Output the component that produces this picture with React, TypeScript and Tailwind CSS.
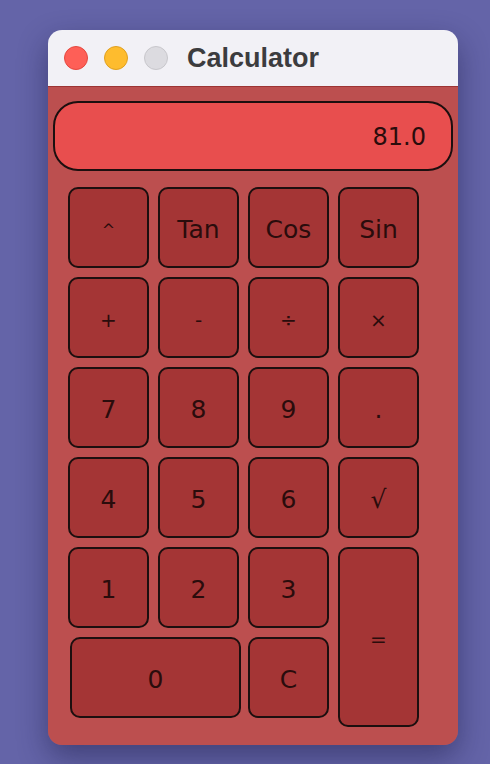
const rows: string[][] = [
  ['^', 'Tan', 'Cos', 'Sin'],
  ['+', '-', '÷', '×'],
  ['7', '8', '9', '.'],
  ['4', '5', '6', '√'],
];

// operator glyphs render smaller in the reference
const sizeFor = (label: string) => {
  if (label === '^') return 'text-[16px]';
  if (['+', '-', '÷', '×', '='].includes(label)) return 'text-[20px]';
  return 'text-[25px]';
};

const Key = ({ label, className = '' }: { label: string; className?: string }) => (
  <button
    className={`flex items-center justify-center rounded-[10px] border-2 border-[#1c0f0f] bg-[#a43535] pt-[4px] text-[#2a0c0c] ${sizeFor(label)} ${className}`}
  >
    {label}
  </button>
);

export default function App() {
  return (
    <div
      className="min-h-[764px] w-full bg-[#6464a8] pl-[48px] pt-[30px]"
      style={{ fontFamily: '"DejaVu Sans", Verdana, sans-serif' }}
    >
      <div className="flex h-[715px] w-[410px] flex-col overflow-hidden rounded-[14px] shadow-[0_12px_30px_rgba(20,20,60,0.45)]">
        <div className="flex h-[56px] shrink-0 items-center bg-[#f2f1f6] pl-[16px]">
          <div className="flex gap-4">
            <span className="h-6 w-6 rounded-full border border-[#e5483f] bg-[#fe5f57]" />
            <span className="h-6 w-6 rounded-full border border-[#e0a020] bg-[#febc2e]" />
            <span className="h-6 w-6 rounded-full border border-[#c8c7cc] bg-[#dcdbe0]" />
          </div>
          <span
            className="ml-[19px] text-[27px] font-bold text-[#3c3c3e]"
            style={{ fontFamily: '"Liberation Sans", Arial, sans-serif' }}
          >
            Calculator
          </span>
        </div>

        <div className="flex flex-1 flex-col border-t border-[#9c3434] bg-[#bc4f4f]">
          <div className="mx-[5px] mt-[14px] flex h-[70px] items-center justify-end rounded-[25px] border-2 border-[#1c0f0f] bg-[#e84e4e] pr-[25px] pt-[2px] text-[24px] text-[#2a0c0c]">
            81.0
          </div>

          <div className="ml-[20px] mt-[16px] flex flex-col gap-[9px]">
            {rows.map((row, i) => (
              <div key={i} className="flex gap-[9px]">
                {row.map((k) => (
                  <Key key={k} label={k} className="h-[81px] w-[81px]" />
                ))}
              </div>
            ))}

            <div className="flex gap-[9px]">
              <div className="flex flex-col gap-[9px]">
                <div className="flex gap-[9px]">
                  <Key label="1" className="h-[81px] w-[81px]" />
                  <Key label="2" className="h-[81px] w-[81px]" />
                  <Key label="3" className="h-[81px] w-[81px]" />
                </div>
                <div className="flex">
                  <Key label="0" className="ml-[2px] h-[81px] w-[171px]" />
                  <Key label="C" className="ml-[7px] h-[81px] w-[81px]" />
                </div>
              </div>
              <Key label="=" className="h-[180px] w-[81px]" />
            </div>
          </div>
        </div>
      </div>
    </div>
  );
}
